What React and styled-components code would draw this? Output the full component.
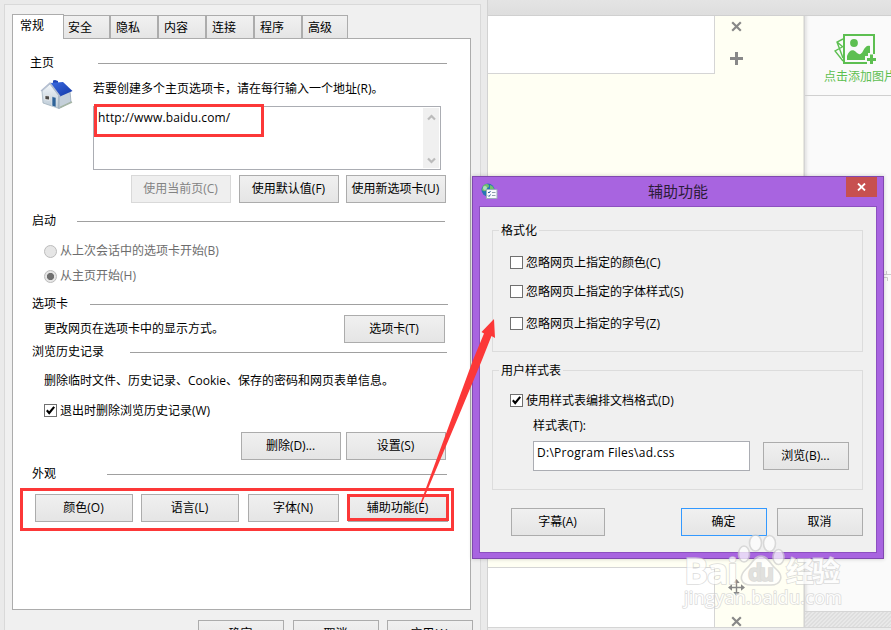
import React from "react";
import styled, { createGlobalStyle } from "styled-components";

const App = () => {
    return (
        <Desktop>
            <GlobalStyle />
            <EditorPage />
            <OptionsWindow />
            <AccessibilityDialog />
            <Marks />
            <Watermark />
        </Desktop>
    )
}
export default App

const EditorPage = () => {
    return (
        <Page>
            <PageTop />
            <PageBody>
                <FormColumn>
                    <Cell $height={58} />
                    <Cell $height={60} $last />
                </FormColumn>
                <ToolColumn>
                    <ToolIcon width="11" height="11" viewBox="0 0 11 11" $top={5}>
                        <path d="M1.2 1.2 9.8 9.8M9.8 1.2 1.2 9.8" stroke="#888" strokeWidth="2.2" />
                    </ToolIcon>
                    <ToolIcon width="13" height="13" viewBox="0 0 13 13" $top={20}>
                        <path d="M6.5 0V13M0 6.5H13" stroke="#888" strokeWidth="3" />
                    </ToolIcon>
                    <ToolIcon width="17" height="17" viewBox="0 0 17 17" $top={514}>
                        <path d="M8.5 2V15M2 8.5H15" stroke="#888" strokeWidth="1.4" />
                        <path d="M8.5 0 11.7 4H5.3ZM8.5 17 5.3 13H11.7ZM0 8.5 4 5.3V11.7ZM17 8.5 13 11.7V5.3Z" fill="#888" />
                    </ToolIcon>
                    <ToolIcon width="11" height="11" viewBox="0 0 11 11" $top={20}>
                        <path d="M1.2 1.2 9.8 9.8M9.8 1.2 1.2 9.8" stroke="#888" strokeWidth="2.2" />
                    </ToolIcon>
                </ToolColumn>
                <SideColumn>
                    <AddPicture>
                        <svg width="43" height="32" viewBox="0 0 43 32">
                            <g fill="none" stroke="#5dbf51">
                                <path d="M10 13 1 18 9 28M9 6 3 9 9 25M3 9 9 14" strokeWidth="1.4" />
                                <path d="M33 30H10V2H40V21" strokeWidth="2" />
                            </g>
                            <circle cx="20" cy="10" r="3.9" fill="#5dbf51" />
                            <path d="M13 27V23C15 17 19 16 22 19 25 22 27 22 29 18 31 14 33 12 36 13V20H34V23H31V27Z" fill="#5dbf51" />
                            <path d="M37.5 21.5V31M33 26.5H42" stroke="#5dbf51" strokeWidth="3" />
                        </svg>
                        <AddLabel>点击添加图片</AddLabel>
                    </AddPicture>
                    <SideBody>
                        <svg width="8" height="14" viewBox="0 0 8 14">
                            <path d="M0 5.5H8M3.5 2V5M0 8.5H4.5V12" fill="none" stroke="#ccc" />
                        </svg>
                    </SideBody>
                    <Hatch />
                </SideColumn>
            </PageBody>
            <PageBottom />
        </Page>
    )
}

const Heading = ({ children, start, end, top }) => {
    return (
        <HeadingRow $top={top} $end={end}>
            <HeadingLabel $width={start}>{children}</HeadingLabel>
            <Rule />
        </HeadingRow>
    )
}

const Check = ({ checked, children, top, left }) => {
    return (
        <Option $top={top} $left={left}>
            <Box>
                {checked && <svg width="11" height="11" viewBox="0 0 11 11">
                    <path d="M1.8 5.2 4.2 8 9.2 1.8" fill="none" stroke="#000" strokeWidth="2.1" />
                </svg>}
            </Box>
            {children}
        </Option>
    )
}

const OptionsWindow = () => {
    const tabs = ["安全", "隐私", "内容", "连接", "程序", "高级"]
    return (
        <Options>
            <Tabs>
                <ActiveTab>常规</ActiveTab>
                {tabs.map((tab) => <Tab key={tab}>{tab}</Tab>)}
            </Tabs>
            <Panel>
                <Heading start={68} end={23} top={14}>主页</Heading>
                <HomeRow>
                    <House />
                    <div>
                        <Text>若要创建多个主页选项卡，请在每行输入一个地址(R)。</Text>
                        <Address>
                            <AddressText>http://www.baidu.com/</AddressText>
                            <Scrollbar>
                                <svg width="9" height="7" viewBox="0 0 9 7">
                                    <path d="M1 5.5 4.5 2 8 5.5" fill="none" stroke="#bbb" strokeWidth="2.2" />
                                </svg>
                                <svg width="9" height="7" viewBox="0 0 9 7">
                                    <path d="M1 1.5 4.5 5 8 1.5" fill="none" stroke="#bbb" strokeWidth="2.2" />
                                </svg>
                            </Scrollbar>
                        </Address>
                    </div>
                </HomeRow>
                <Row $top={5} $left={118}>
                    <Button disabled>使用当前页(C)</Button>
                    <Button $gap={8}>使用默认值(F)</Button>
                    <Button $gap={7}>使用新选项卡(U)</Button>
                </Row>
                <Heading start={45} end={25} top={8}>启动</Heading>
                <Option $top={10} $left={31} $muted><Radio />从上次会话中的选项卡开始(B)</Option>
                <Option $top={5} $left={31} $muted><Radio $on />从主页开始(H)</Option>
                <Heading start={58} end={22} top={8}>选项卡</Heading>
                <Row $top={1} $left={31}>
                    <Text>更改网页在选项卡中的显示方式。</Text>
                    <Button $width={101} $push>选项卡(T)</Button>
                </Row>
                <Heading start={98} end={23} top={-1}>浏览历史记录</Heading>
                <Row $top={9} $left={31}>
                    <Text>删除临时文件、历史记录、Cookie、保存的密码和网页表单信息。</Text>
                </Row>
                <Check checked top={10} left={31}>退出时删除浏览历史记录(W)</Check>
                <Row $top={11} $left={228}>
                    <Button>删除(D)...</Button>
                    <Button $gap={5}>设置(S)</Button>
                </Row>
                <Heading start={75} end={23} top={4}>外观</Heading>
                <Row $top={10} $left={22}>
                    <Button $width={98}>颜色(O)</Button>
                    <Button $width={98} $gap={8}>语言(L)</Button>
                    <Button $width={91} $gap={9}>字体(N)</Button>
                    <Button $width={100} $gap={9}>辅助功能(E)</Button>
                </Row>
            </Panel>
            <Row $top={10} $left={186}>
                <Button $width={86}>确定</Button>
                <Button $width={86} $gap={9}>取消</Button>
                <Button $width={86} $gap={8}>应用(A)</Button>
            </Row>
        </Options>
    )
}

const House = () => {
    return (
        <HouseIcon width="34" height="32" viewBox="0 0 34 32">
            <defs>
                <linearGradient id="roof" x1="0" y1="0" x2="1" y2="1">
                    <stop offset="0" stopColor="#3d6be0" />
                    <stop offset="1" stopColor="#1238a8" />
                </linearGradient>
                <linearGradient id="wall" x1="0" y1="0" x2="0" y2="1">
                    <stop offset="0" stopColor="#f4f7fa" />
                    <stop offset="1" stopColor="#b9c8d4" />
                </linearGradient>
            </defs>
            <path d="M13 4V1.5L15 1 18 2V6H13Z" fill="#1f45b5" />
            <path d="M2 12 10 5 19 17V29.5L3 24Z" fill="url(#wall)" stroke="#9aabb8" strokeWidth="0.7" />
            <path d="M19 17 30 12 31 23 19 29.5Z" fill="#c5d0da" stroke="#8fa1b0" strokeWidth="0.7" />
            <path d="M10 4 23 3 32.5 12 20 17.5Z" fill="url(#roof)" />
            <path d="M1 12 10 4 20 17.5" fill="none" stroke="#b3bdd0" strokeWidth="1.3" />
            <path d="M5 16.5 9.5 17V21L5 20.5Z" fill="#4c4a48" stroke="#fff" strokeWidth="0.7" />
            <path d="M12 17.5 16 18.5V28.3L12 27Z" fill="#2e6298" stroke="#e8edf2" strokeWidth="0.6" />
            <path d="M20 28.5 32 23" stroke="#a5b5a5" strokeWidth="1.5" />
        </HouseIcon>
    )
}

const AccessibilityDialog = () => {
    return (
        <Dialog>
            <TitleBar>
                <svg width="17" height="17" viewBox="0 0 17 17">
                    <circle cx="7" cy="7" r="6.5" fill="#2674b4" />
                    <path d="M2 3C5 0 8 1 8 3S5 5 5 7 2 8 1 7ZM9 2C12 3 14 6 13 9L9 8Z" fill="#72c16b" />
                    <circle cx="4" cy="5" r="2" fill="#d9f0fb" opacity="0.6" />
                    <path d="M5.5 6.5H16V15.5H5.5Z" fill="#f7f9fc" stroke="#9badb9" />
                    <path d="M7 9 8 10 9.5 8M7 12.5 8 13.5 9.5 11.5" fill="none" stroke="#2b5b9d" />
                    <path d="M11 9.5H14.5M11 12.5H14.5" stroke="#8fa0ad" />
                </svg>
                <Title>辅助功能</Title>
                <Close>
                    <svg width="9" height="8" viewBox="0 0 9 8">
                        <path d="M1 0.5 8 7.5M8 0.5 1 7.5" stroke="#fff" strokeWidth="1.8" />
                    </svg>
                </Close>
            </TitleBar>
            <DialogBody>
                <Group $height={122}>
                    <Legend>格式化</Legend>
                    <Check top={12} left={17}>忽略网页上指定的颜色(C)</Check>
                    <Check top={9} left={17}>忽略网页上指定的字体样式(S)</Check>
                    <Check top={12} left={17}>忽略网页上指定的字号(Z)</Check>
                </Group>
                <Group $height={120} $top={18}>
                    <Legend>用户样式表</Legend>
                    <Check checked top={10} left={17}>使用样式表编排文档格式(D)</Check>
                    <Row $top={5} $left={40}>
                        <Text>样式表(T):</Text>
                    </Row>
                    <Row $top={5} $left={40}>
                        <PathInput>D:\Program Files\ad.css</PathInput>
                        <Button $width={86} $gap={13}>浏览(B)...</Button>
                    </Row>
                </Group>
                <Row $top={18} $left={19}>
                    <Button $width={94}>字幕(A)</Button>
                    <Button $width={86} $gap={76} $primary>确定</Button>
                    <Button $width={86} $gap={10}>取消</Button>
                </Row>
            </DialogBody>
        </Dialog>
    )
}

const Marks = () => {
    return (
        <Overlay width="891" height="630" viewBox="0 0 891 630">
            <g fill="none" stroke="#fc3838" strokeWidth="3">
                <rect x="95.5" y="105.5" width="167" height="30" />
                <rect x="21.5" y="489.5" width="431" height="40" />
                <rect x="348.5" y="495.5" width="99" height="24" />
            </g>
            <path d="M494 319 495 338 491.5 336 482 360 457 420 422 503 420.5 503 451 420 473 360 484 333.5 481.5 332Z" fill="#fc3838" />
        </Overlay>
    )
}

const Watermark = () => {
    return (
        <Overlay width="891" height="630" viewBox="0 0 891 630">
            <g opacity="0.72" fill="#fff" stroke="#cfcfcf" strokeWidth="1.6">
                <ellipse cx="755.5" cy="543" rx="6" ry="8" />
                <ellipse cx="769.5" cy="543.5" rx="6" ry="8" />
                <ellipse cx="744" cy="554" rx="5.5" ry="8" />
                <ellipse cx="778.5" cy="557" rx="5.5" ry="7.5" />
                <path d="M761 556C768 556 770 564 776 569 785 577 780 585 771 585H751C741 585 738 577 746 569 752 564 754 556 761 556Z" />
                <MarkText x="684" y="584" $size={36} $bold textLength="54">Bai</MarkText>
                <MarkText x="748" y="581" $size={23} $bold textLength="26" fill="#d6d6d6">du</MarkText>
                <MarkText x="786" y="582" $size={28} $bold textLength="54">经验</MarkText>
                <MarkText x="684" y="604" $size={18} textLength="158">jingyan.baidu.com</MarkText>
            </g>
        </Overlay>
    )
}

const GlobalStyle = createGlobalStyle`
  * {
  box-sizing: border-box;
  }
  body {
  margin: 0;
  font-family: "Open Sans", "Noto Sans CJK SC", sans-serif;
  font-size: 12px;
  line-height: 20px;
  color: #000;
  overflow: hidden;
  }
`
const Desktop = styled.div`
  position: relative;
  width: 891px;
  height: 630px;
  overflow: hidden;
  background: #eaeaea;
`
const Page = styled.div`
  display: flex;
  flex-direction: column;
  height: 630px;
  margin-left: 487px;
  border-left: 1px solid #d2d2d2;
`
const PageTop = styled.div`
  height: 16px;
  background: linear-gradient(#e4e4e4, #dedede);
  border-bottom: 1px solid #d0d0d0;
`
const PageBody = styled.div`
  display: flex;
  height: 611px;
  background: #fffff3;
`
const PageBottom = styled.div`
  height: 3px;
  background: #ededed;
  border-top: 1px solid #d5d5d5;
`
const FormColumn = styled.div`
  display: flex;
  flex-direction: column;
  justify-content: space-between;
  width: 227px;
`
const Cell = styled.div`
  height: ${(props) => props.$height}px;
  background: #fff;
  border: 1px solid #d5d5d5;
  border-left: none;
  ${(props) => props.$last ? "border-bottom: none;" : "border-top: none;"}
`
const ToolColumn = styled.div`
  display: flex;
  flex-direction: column;
  align-items: center;
  width: 89px;
  padding-right: 46px;
  border-right: 1px solid #e8e8e0;
`
const ToolIcon = styled.svg`
  flex: none;
  margin-top: ${(props) => props.$top}px;
`
const SideColumn = styled.div`
  display: flex;
  flex-direction: column;
  width: 87px;
  background: #fafafa;
  border-left: 1px solid #d4d4d4;
  box-shadow: inset 4px 0 3px -2px #e4e4e4;
`
const AddPicture = styled.div`
  height: 80px;
  padding: 17px 0 0 19px;
  border-bottom: 1px solid #d0d0d0;
  overflow: hidden;
  svg {
  display: block;
  margin-left: 10px;
  }
`
const AddLabel = styled.div`
  margin-top: 2px;
  white-space: nowrap;
  color: #5dbf51;
`
const SideBody = styled.div`
  flex: 1;
  padding: 173px 0 0 78px;
`
const Hatch = styled.div`
  height: 16px;
  border-top: 1px solid #d5d5d5;
  background: repeating-linear-gradient(135deg, #e8e8e8 0, #e8e8e8 1.4px, #dedede 1.4px, #dedede 2.8px);
`
const Options = styled.div`
  position: absolute;
  left: 4px;
  top: 4px;
  width: 477px;
  height: 640px;
  padding: 8px 0 0 7px;
  border: 1px solid #d9d9d9;
  background: #f0f0f0;
`
const Tabs = styled.div`
  display: flex;
  align-items: flex-end;
  height: 25px;
`
const Tab = styled.div`
  width: 48px;
  height: 23px;
  padding: 2px 0 0 5px;
  border: 1px solid #acacac;
  border-bottom: none;
  background: linear-gradient(#f1f1f1, #e5e5e5);
  &:last-child {
  width: 46px;
  }
`
const ActiveTab = styled.div`
  position: relative;
  z-index: 1;
  width: 52px;
  height: 25px;
  margin: 0 -2px -1px 0;
  padding: 1px 0 0 7px;
  border: 1px solid #acacac;
  border-bottom: none;
  background: #fff;
`
const Panel = styled.div`
  display: flow-root;
  width: 459px;
  height: 572px;
  border: 1px solid #acacac;
  background: #fff;
`
const HeadingRow = styled.div`
  display: flex;
  align-items: center;
  height: 20px;
  margin: ${(props) => props.$top}px ${(props) => props.$end}px 0 19px;
  &:first-child {
  margin-left: 17px;
  }
`
const HeadingLabel = styled.div`
  width: ${(props) => props.$width}px;
  white-space: nowrap;
`
const Rule = styled.div`
  flex: 1;
  height: 1px;
  background: #a0a0a0;
`
const HomeRow = styled.div`
  display: flex;
  margin: 6px 0 0 27px;
`
const HouseIcon = styled.svg`
  flex: none;
  margin-right: 19px;
`
const Text = styled.div`
  white-space: nowrap;
`
const Address = styled.div`
  display: flex;
  justify-content: space-between;
  width: 348px;
  height: 64px;
  margin-top: 7px;
  padding: 1px;
  border: 1px solid #abadb3;
  background: #fff;
`
const AddressText = styled.div`
  padding-left: 3px;
  letter-spacing: 0.13px;
`
const Scrollbar = styled.div`
  display: flex;
  flex-direction: column;
  align-items: center;
  justify-content: space-between;
  width: 16px;
  padding: 6px 0 4px;
  background: #f0f0f0;
`
const Row = styled.div`
  display: flex;
  align-items: center;
  margin: ${(props) => props.$top}px 0 0 ${(props) => props.$left}px;
`
const Button = styled.button`
  flex: none;
  width: ${(props) => props.$width || 100}px;
  height: 28px;
  margin-left: ${(props) => props.$push ? "auto" : `${props.$gap || 0}px`};
  margin-right: ${(props) => props.$push ? "25px" : "0"};
  padding: 0 1px 0 0;
  border: 1px solid ${(props) => props.$primary ? "#3399ff" : "#acacac"};
  background: linear-gradient(#f0f0f0, #e5e5e5);
  color: #000;
  font: inherit;
  white-space: nowrap;
  &:disabled {
  border-color: #d9d9d9;
  background: #efefef;
  color: #838383;
  }
`
const Option = styled.div`
  display: flex;
  align-items: center;
  height: 20px;
  margin: ${(props) => props.$top}px 0 0 ${(props) => props.$left}px;
  color: ${(props) => props.$muted ? "#6d6d6d" : "#000"};
  white-space: nowrap;
`
const Radio = styled.span`
  width: 13px;
  height: 13px;
  margin-right: 3px;
  border: 1px solid #bcbcbc;
  border-radius: 50%;
  background: ${(props) => props.$on ? "radial-gradient(circle, #707070 3.2px, #e6e6e6 4px)" : "#e6e6e6"};
`
const Box = styled.span`
  width: 13px;
  height: 13px;
  margin: -1px 3px 0 0;
  border: 1px solid #707070;
  background: #fff;
  svg {
  display: block;
  }
`
const Dialog = styled.div`
  position: absolute;
  left: 472px;
  top: 176px;
  width: 412px;
  height: 383px;
  padding: 0 6px;
  border: 1px solid #8048b0;
  background: #a864e0;
  box-shadow: 0 0 4px rgba(0, 0, 0, 0.2);
`
const TitleBar = styled.div`
  display: flex;
  justify-content: space-between;
  height: 29px;
  padding-left: 2px;
  > svg {
  margin-top: 6px;
  }
`
const Title = styled.div`
  margin: 4px 0 0 12px;
  font-size: 15px;
  color: #2c1c38;
`
const Close = styled.div`
  display: flex;
  align-items: center;
  justify-content: center;
  width: 31px;
  height: 20px;
  background: #c75050;
`
const DialogBody = styled.div`
  height: 347px;
  padding: 23px 13px 0 12px;
  border: 1px solid #8c50c0;
  background: #f0f0f0;
`
const Group = styled.div`
  display: flow-root;
  width: 371px;
  height: ${(props) => props.$height}px;
  margin-top: ${(props) => props.$top || 0}px;
  border: 1px solid #dcdcdc;
`
const Legend = styled.div`
  width: max-content;
  margin: -10px 0 0 6px;
  padding: 0 2px;
  background: #f0f0f0;
`
const PathInput = styled.div`
  width: 217px;
  height: 30px;
  padding: 1px 3px;
  border: 1px solid #abadb3;
  background: #fff;
  letter-spacing: 0.28px;
`
const Overlay = styled.svg`
  position: absolute;
  left: 0;
  top: 0;
  pointer-events: none;
`
const MarkText = styled.text`
  font-family: "Open Sans", "Noto Sans CJK SC", sans-serif;
  font-size: ${(props) => props.$size}px;
  font-weight: ${(props) => props.$bold ? 700 : 400};
  paint-order: stroke;
`
